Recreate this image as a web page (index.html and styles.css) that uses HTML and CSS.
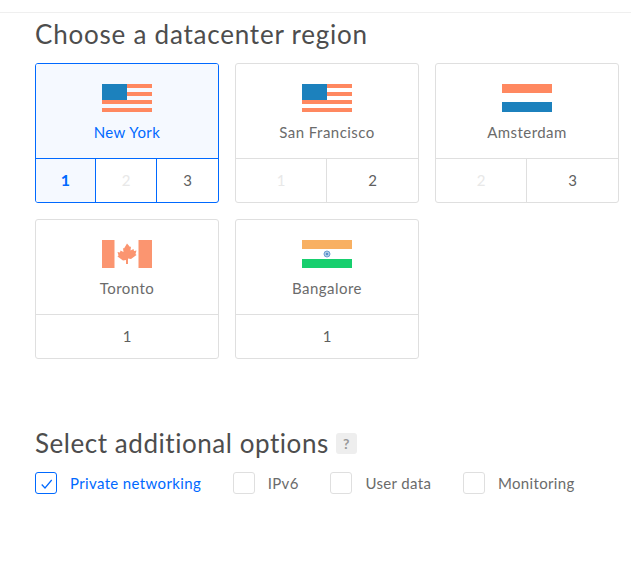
FILE: index.html
```html
<!DOCTYPE html>
<html lang="en">
<head>
<meta charset="utf-8">
<title>Choose a datacenter region</title>
<link rel="stylesheet" href="styles.css">
</head>
<body>
<div class="topbar"></div>
<main class="page">
  <h2 class="title title-region">Choose a datacenter region</h2>
  <div class="regions">
    <div class="card selected">
      <div class="head">
        <svg class="flag" viewBox="0 0 50 28"><rect y="0" width="50" height="4" fill="#ff8860"/><rect y="8" width="50" height="4" fill="#ff8860"/><rect y="16" width="50" height="4" fill="#ff8860"/><rect y="24" width="50" height="4" fill="#ff8860"/><rect width="25" height="16" fill="#1c81bd"/></svg>
        <div class="city">New York</div>
      </div>
      <div class="nums nums-three"><div class="num active">1</div><div class="num off">2</div><div class="num">3</div></div>
    </div>
    <div class="card">
      <div class="head">
        <svg class="flag" viewBox="0 0 50 28"><rect y="0" width="50" height="4" fill="#ff8860"/><rect y="8" width="50" height="4" fill="#ff8860"/><rect y="16" width="50" height="4" fill="#ff8860"/><rect y="24" width="50" height="4" fill="#ff8860"/><rect width="25" height="16" fill="#1c81bd"/></svg>
        <div class="city">San Francisco</div>
      </div>
      <div class="nums"><div class="num off">1</div><div class="num">2</div></div>
    </div>
    <div class="card">
      <div class="head">
        <svg class="flag" viewBox="0 0 50 28"><rect width="50" height="9" fill="#ff8860"/><rect y="18" width="50" height="10" fill="#1c81bd"/></svg>
        <div class="city">Amsterdam</div>
      </div>
      <div class="nums"><div class="num off">2</div><div class="num">3</div></div>
    </div>
    <div class="card">
      <div class="head">
        <svg class="flag" viewBox="0 0 50 28"><rect width="12.5" height="28" fill="#fb9570"/><rect x="36.5" width="13.5" height="28" fill="#fb9570"/><path d="M25 3.500l3 3.500 1-.5-.5 4 3-1.500.5 2 2.500-.5-1 3.500 1 1-5.500 4-3-.5v5.500h-2V20l-3 .5-5.500-4 1-1-1-3.500 2.500.5.500-2 3 1.500-.5-4 1 .5z" fill="#fb9570"/></svg>
        <div class="city">Toronto</div>
      </div>
      <div class="nums"><div class="num">1</div></div>
    </div>
    <div class="card">
      <div class="head">
        <svg class="flag" viewBox="0 0 50 28"><rect width="50" height="9" fill="#f8b062"/><rect y="19" width="50" height="9" fill="#17cf6e"/><circle cx="25" cy="14" r="3" fill="#a9c8e6" stroke="#6f9fd2" stroke-width="1"/><circle cx="25" cy="14" r="1" fill="#3f7fc0"/></svg>
        <div class="city">Bangalore</div>
      </div>
      <div class="nums"><div class="num">1</div></div>
    </div>
  </div>
  <div class="options-head">
    <h2 class="title">Select additional options</h2>
    <span class="help">?</span>
  </div>
  <div class="options">
    <div class="option checked">
      <span class="box"><svg class="tick" viewBox="0 0 20 20"><path d="M5.700 11.500L9 15l6.700-8" fill="none" stroke="#0069ff" stroke-width="1.200"/></svg></span>
      <span>Private networking</span>
    </div>
    <div class="option"><span class="box"></span><span>IPv6</span></div>
    <div class="option"><span class="box"></span><span>User data</span></div>
    <div class="option"><span class="box"></span><span>Monitoring</span></div>
  </div>
</main>
</body>
</html>
```
FILE: styles.css
```css
* { box-sizing: border-box; }
html, body { margin: 0; padding: 0; background: #fff; }
body {
  font-family: "Lato", "Open Sans", sans-serif;
  color: #676767;
  height: 567px;
  overflow: hidden;
}
.topbar { height: 13px; border-bottom: 1px solid #efefef; }
.page { padding: 0 12px 0 35px; }
.title {
  margin: 0;
  font-family: "Lato", sans-serif;
  font-size: 26px;
  font-weight: 400;
  line-height: 32px;
  letter-spacing: 0.55px;
  color: #4d4d4d;
}
.title-region { margin-top: 5px; letter-spacing: 0.78px; }
.regions {
  display: grid;
  grid-template-columns: repeat(3, 184px);
  gap: 16px;
  margin-top: 13px;
}
.card {
  height: 140px;
  border: 1px solid #dfdfdf;
  border-radius: 3px;
  display: flex;
  flex-direction: column;
  overflow: hidden;
}
.head {
  height: 95px;
  display: flex;
  flex-direction: column;
  align-items: center;
  padding-top: 20px;
  border-bottom: 1px solid #dfdfdf;
}
.flag { width: 50px; height: 28px; display: block; }
.city { margin-top: 10px; font-size: 15px; line-height: 20px; letter-spacing: 0.45px; color: #6b6b6b; }
.nums { flex: 1; display: grid; grid-auto-flow: column; grid-auto-columns: 1fr; }
.nums-three { grid-template-columns: 60px 61px 1fr; }
.num {
  display: flex;
  align-items: center;
  justify-content: center;
  padding-bottom: 2px;
  font-size: 15px;
  color: #5f5f5f;
  border-right: 1px solid #dfdfdf;
}
.num:last-child { border-right: 0; }
.num.off { color: #e8e8e8; }
.selected { border-color: #0069ff; }
.selected .head { background: #f5f9ff; border-bottom-color: #0069ff; }
.selected .city { color: #0069ff; }
.selected .num { border-right-color: #0069ff; }
.num.active { background: #f5f9ff; color: #0069ff; font-weight: 700; font-size: 16px; }
.options-head {
  display: flex;
  align-items: center;
  gap: 7px;
  margin-top: 68px;
}
.help {
  width: 21px;
  height: 21px;
  border-radius: 3px;
  background: #eee;
  color: #999;
  font-size: 14px;
  font-weight: 700;
  display: flex;
  align-items: center;
  justify-content: center;
}
.options { display: flex; gap: 31.6px; margin-top: 13px; }
.option { display: flex; align-items: center; gap: 13px; font-size: 15px; letter-spacing: 0.36px; color: #6b6b6b; }
.box {
  width: 22px;
  height: 22px;
  border: 1px solid #dfdfdf;
  border-radius: 3px;
  display: block;
}
.tick { display: block; width: 20px; height: 20px; }
.option.checked { color: #0069ff; }
.option.checked .box { border-color: #0069ff; }
```
